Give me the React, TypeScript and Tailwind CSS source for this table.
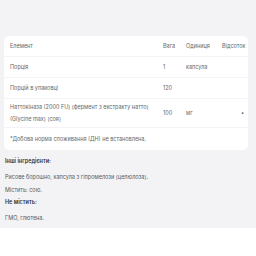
import React from "react";

const rows = [
  { name: "Порція", w: "1", u: "капсула", p: "" },
  { name: "Порцій в упаковці", w: "120", u: "", p: "" },
];

export default function App() {
  return (
    <div className="w-[256px] h-[256px] bg-white text-[#666] overflow-hidden" style={{ fontFamily: "Inter, 'Noto Sans', sans-serif" }}>
      <div className="bg-[#f3f3f5] h-[228px] pt-[36px] px-[4px] pr-[8px]">
        <div className="bg-white rounded-[5px] text-[5.5px] leading-[8px]">
          <div className="grid grid-cols-[153px_23px_36px_1fr] items-center h-[21px] pl-[6px] border-b border-[#f3f3f5]">
            <div>Елемент</div>
            <div>Вага</div>
            <div>Одиниця</div>
            <div>Відсоток</div>
          </div>
          {rows.map((r, i) => (
            <div key={i} className="grid grid-cols-[153px_23px_36px_1fr] items-center h-[21px] pl-[6px] border-b border-[#f3f3f5]">
              <div>{r.name}</div>
              <div>{r.w}</div>
              <div>{r.u}</div>
              <div>{r.p}</div>
            </div>
          ))}
          <div className="grid grid-cols-[153px_23px_36px_1fr] items-center h-[29px] pl-[6px] border-b border-[#f3f3f5]">
            <div className="leading-[12px]">
              <div>Наттокіназа (2000 FU) (фермент з екстракту натто)</div>
              <div>(Glycine max) (соя)</div>
            </div>
            <div>100</div>
            <div>мг</div>
            <div className="text-right pr-[4px]">•</div>
          </div>
          <div className="h-[22px] flex items-center pl-[6px]">*Добова норма споживання (ДН) не встановлена.</div>
        </div>
        <div className="pl-[1px] text-[5.5px] leading-[8px] text-[#5a5a5a]">
          <div className="mt-[7px] font-semibold text-[#333]">Інші інгредієнти:</div>
          <div className="mt-[8px]">Рисове борошно, капсула з гіпромелози (целюлоза).</div>
          <div className="mt-[5px]">Містить: сою.</div>
          <div className="mt-[4px] font-semibold text-[#333]">Не містить:</div>
          <div className="mt-[8px]">ГМО, глютена.</div>
        </div>
      </div>
    </div>
  );
}
